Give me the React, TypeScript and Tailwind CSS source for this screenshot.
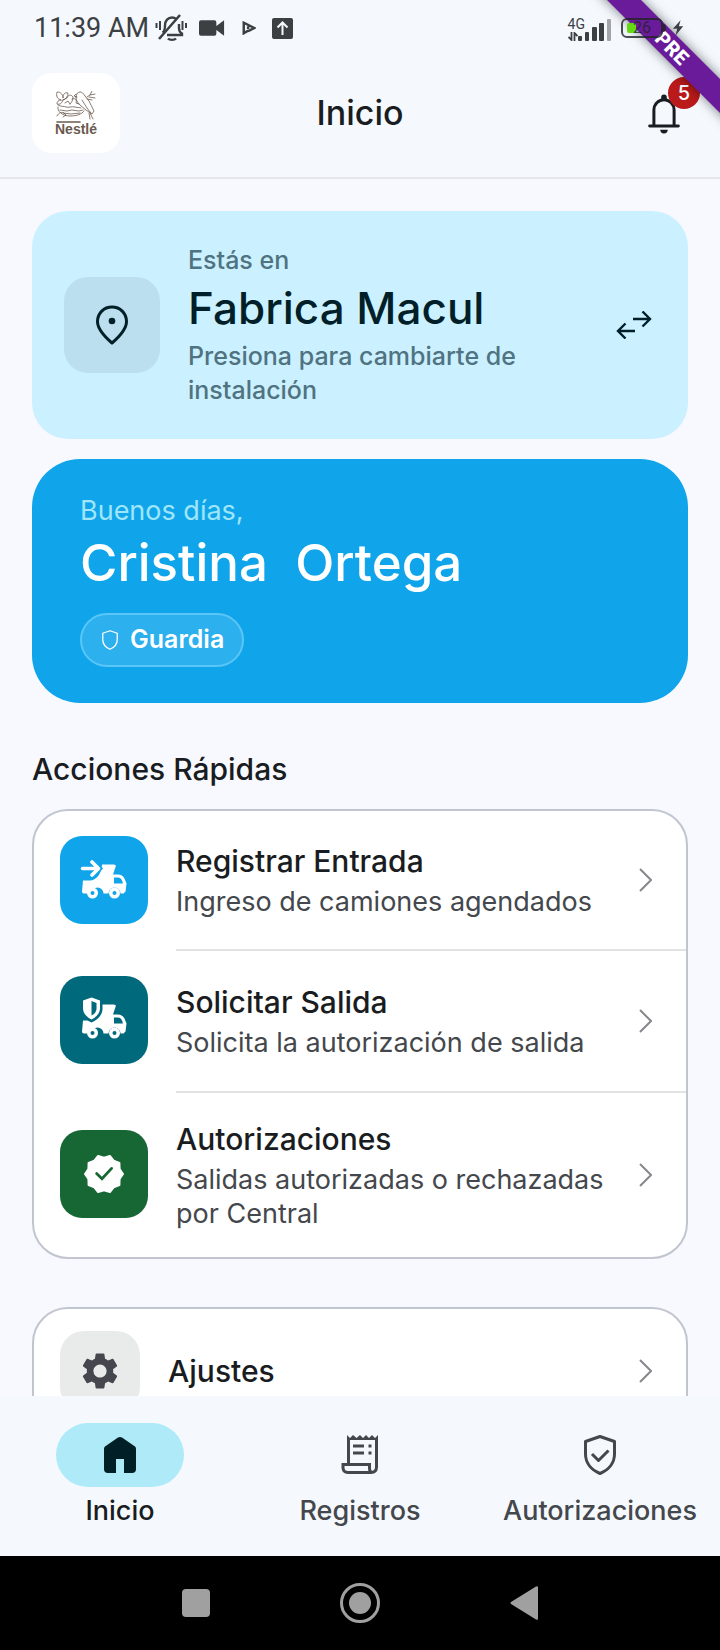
import type { ReactNode } from "react";

type Action = {
  title: string;
  subtitle: string;
  color: string;
  row: string;
  icon: ReactNode;
};

function StatusIcons() {
  return (
    <div className="flex items-center text-[#3c4043]">
      <svg className="size-8" viewBox="0 0 32 32" fill="none" stroke="currentColor" strokeWidth="2.4">
        <path d="M4 27 25 3" strokeWidth="2.6" />
        <path d="M7.500 20.500c2-1 2.500-3 2.500-7 0-5 3-8 7-8 1.500 0 3 .4 4 1.300M24 12v4c0 3 .8 4.500 3 5.500v1.500H12" />
        <path d="M13 26.500c1.500 1.800 6.500 1.800 8 0" />
        <path d="M1.500 11v5M5 9v9M27.500 9v9M31 11v5" strokeWidth="2" />
      </svg>
      <svg className="ml-3 h-[18px] w-[27px]" viewBox="0 0 28 18" fill="currentColor">
        <path d="M2 1h14a2 2 0 0 1 2 2v4l8-6v16l-8-6v4a2 2 0 0 1-2 2H2a2 2 0 0 1-2-2V3a2 2 0 0 1 2-2z" />
      </svg>
      <svg className="ml-4 size-[14px]" viewBox="0 0 16 16" fill="none" stroke="currentColor" strokeWidth="2.800">
        <path d="M2 9V2l12 6-7 3.500M7 6v3M2 9v5l5-3" />
      </svg>
      <svg className="ml-4 size-[21px]" viewBox="0 0 21 21" fill="none">
        <rect width="21" height="21" rx="2" fill="currentColor" />
        <path d="M10.500 17V5M5.500 9.500l5-5 5 5" stroke="#f5f9fe" strokeWidth="2" />
      </svg>
    </div>
  );
}

function SignalIcons() {
  return (
    <div className="flex items-center text-[#3c4043]">
      <div className="flex h-[26px] items-end">
        <div className="flex flex-col items-start">
          <span className="font-[Roboto] text-sm leading-4">4G</span>
          <svg className="h-[9px] w-[10px]" viewBox="0 0 10 9" fill="none" stroke="currentColor" strokeWidth="1.800">
            <path d="M3.500 0v8L.5 5M6.500 9V1l3 3" />
          </svg>
        </div>
        <svg className="-ml-2 h-[22px] w-[34px]" viewBox="0 0 34 22" fill="currentColor">
          <rect x="1" y="17" width="4" height="5" rx="1" />
          <rect x="8" y="13" width="4" height="9" rx="1" />
          <rect x="15" y="8" width="5" height="14" rx="1" />
          <rect x="22" y="4" width="5" height="18" rx="1" />
          <rect x="30" y="0" width="4" height="22" rx="1" opacity=".45" />
        </svg>
      </div>
      <div className="relative ml-[10px] flex h-5 w-[42px] items-center justify-center rounded-md border-2 border-[#202226]/80">
        <span className="absolute left-1 h-[10px] w-[9px] rounded-xs bg-[#63d813]" />
        <span className="relative font-[Roboto] text-base leading-4 text-[#202226]/80">26</span>
      </div>
      <span className="h-2 w-[3px] rounded-r-sm bg-[#202226]/80" />
      <svg className="ml-[6px] h-[18px] w-3" viewBox="0 0 14 18" fill="currentColor">
        <path d="M10 0 1 10h5L4 18 13 7H8z" />
      </svg>
    </div>
  );
}

function NestLogo() {
  return (
    <div className="flex h-20 w-[88px] flex-col items-center justify-center rounded-[20px] bg-white text-[#6b5a4f]">
      <svg className="h-8 w-10" viewBox="0 0 40 32" fill="none" stroke="currentColor" strokeWidth=".8" strokeLinecap="round" strokeLinejoin="round">
        <path d="M5 9C1 8 0 5 1 1c4 0 6 3 6 6 0-4 2-6 5-5 0 4-2 6-5 7M5 9c-3 0-4 2-4 4 3 1 5-1 6-4" />
        <path d="M7 9l4-2c1-3 4-4 6-1 0 3-1 5-3 7M16 8c3-1 5 0 4 4l3 1M9 12l3-2 2 3" />
        <path d="M20 6c0-3 2-5 4-5s3 1 5 4l4 5 5 10-2 3-6-4-6-5c-3-3-4-5-4-8z" />
        <path d="M20 3l-2 2 3 1M26 9l5 8 4 5M34 22l3 6M33 22l1 6M31 6l3-2 2-4M34 4l5-1M33 6l6 1M31 8l5 1" />
        <path d="M2 14c3 2 6 1 8 2s6-1 9 0 5 0 6 1M2 16c-1 4 4 9 12 9 7 0 12-2 14-5" />
        <path d="M4 19l7 1 5-1 7 1 4-1M7 22l8 1 9-1M1 25c2-4 5-4 7-3l2 2-3 2" />
        <path d="M1 31h23" strokeWidth="1.600" />
      </svg>
      <span className="font-['Liberation_Sans',sans-serif] text-sm leading-3 font-bold">Nestlé</span>
    </div>
  );
}

function BellIcon() {
  return (
    <svg className="size-12" viewBox="0 0 24 24" fill="currentColor">
      <path d="M4.800 19.200a.7.7 0 0 1 0-1.400h1.400V10.400a5.700 5.700 0 0 1 4.400-5.600v-.6a1.400 1.400 0 0 1 2.800 0v.6a5.700 5.700 0 0 1 4.400 5.600v7.400h1.400a.7.7 0 0 1 0 1.400zm2.900-1.400h8.600v-7.400a4.300 4.300 0 0 0-8.600 0zM12 22.200a1.900 1.900 0 0 1-1.900-1.800h3.800A1.900 1.900 0 0 1 12 22.200z" />
    </svg>
  );
}

function PinIcon() {
  return (
    <svg className="size-12" viewBox="0 0 48 48" fill="none" stroke="currentColor" strokeWidth="3">
      <path d="M24 42C13.500 33 9.500 27 9.500 20.500 9.500 12 16 6 24 6s14.500 6 14.500 14.500C38.500 27 34.500 33 24 42z" strokeLinejoin="round" />
      <circle cx="24" cy="20" r="3.300" fill="currentColor" stroke="none" />
    </svg>
  );
}

function SwapIcon() {
  return (
    <svg className="mr-1 h-7 w-9" viewBox="0 0 36 28" fill="none" stroke="currentColor" strokeWidth="2.400">
      <path d="M17 8h17M26.500 .5l7.500 7.500-7.500 7.500M19 20H2M9.500 12.500L2 20l7.500 7.500" />
    </svg>
  );
}

function ChevronIcon() {
  return (
    <svg className="h-6 w-[14px] shrink-0 text-[#85888c]" viewBox="0 0 14 24" fill="none" stroke="currentColor" strokeWidth="2">
      <path d="M2 1l11 11L2 23" />
    </svg>
  );
}

function TruckBody() {
  return (
    <>
      <path d="M22 5.500h12l2 1-3 9h5c3 0 5 1.500 6.500 4l2 5-1 8-2 2h-3a6 6 0 0 0-12 0h-5a6 6 0 0 0-12 0H4q-2 0-2-2l1-11h7c6 0 12-7 12-16z" />
      <path d="M34 18.500h4c2 0 3 1 4 3l1 3h-9z" fill="var(--hole)" />
      <circle cx="12.500" cy="34" r="5.500" />
      <circle cx="34.500" cy="34" r="5.500" />
      <circle cx="12.500" cy="34" r="2" fill="var(--hole)" />
      <circle cx="34.500" cy="34" r="2" fill="var(--hole)" />
    </>
  );
}

function TruckEntryIcon() {
  return (
    <svg className="h-10 w-12 [--hole:#10a5ea]" viewBox="0 1 48 40" fill="currentColor">
      <TruckBody />
      <path d="M2 9.500h15M11.500 3.500l6 6-6 6" fill="none" stroke="var(--hole)" strokeWidth="8" />
      <path d="M2.500 9.500h15M12 3l6.500 6.500L12 16" fill="none" stroke="currentColor" strokeWidth="3.600" strokeLinecap="round" strokeLinejoin="round" />
    </svg>
  );
}

function TruckShieldIcon() {
  return (
    <svg className="h-10 w-12 overflow-visible [--hole:#00697b]" viewBox="0 1 48 40" fill="currentColor">
      <TruckBody />
      <path d="M11.500-4l11 4v10c0 6-5 11-11 13.500C5.500 21 1 16 1 10V0z" fill="var(--hole)" />
      <path d="M11.500-1.500l8.500 3v8c0 4.500-3.500 8.500-8.500 11C6.500 18 3 14 3 9.500v-8z" />
      <path d="M11.500 2l5 2v6c0 2.500-2 5-5 6.500z" fill="var(--hole)" />
    </svg>
  );
}

function VerifiedIcon() {
  return (
    <svg className="size-12" viewBox="0 0 24 24" fill="currentColor">
      <path
        d="M21.500 12L19.800 9.470L19.690 6.420L16.820 5.370L14.940 2.970L12 3.800L9.060 2.970L7.180 5.370L4.310 6.420L4.200 9.470L2.500 12L4.200 14.530L4.310 17.580L7.180 18.630L9.060 21.030L12 20.200L14.940 21.030L16.820 18.630L19.690 17.580L19.800 14.530Z"
        stroke="currentColor"
        strokeLinejoin="round"
      />
      <path d="M8.300 11.800l2.700 2.600 4.800-5.200" fill="none" stroke="#176734" strokeWidth="1.400" strokeLinecap="round" />
    </svg>
  );
}

function GearIcon() {
  return (
    <svg className="size-11" viewBox="0 0 24 24" fill="currentColor">
      <path d="M19.140 12.940c.04-.3.060-.61.060-.94 0-.32-.02-.64-.07-.94l2.030-1.580a.49.490 0 0 0 .12-.61l-1.920-3.320a.488.488 0 0 0-.59-.22l-2.390.96c-.5-.38-1.030-.7-1.620-.94l-.36-2.540a.484.484 0 0 0-.48-.41h-3.840c-.24 0-.43.170-.47.410l-.36 2.540c-.59.240-1.130.57-1.620.94l-2.390-.96c-.22-.08-.47 0-.59.220L2.740 8.870c-.12.210-.08.470.12.610l2.030 1.580c-.05.300-.09.630-.09.940s.02.640.07.940l-2.030 1.580a.49.490 0 0 0-.12.610l1.920 3.320c.12.220.37.290.59.220l2.390-.96c.5.380 1.030.7 1.620.94l.36 2.540c.05.240.24.410.48.410h3.840c.24 0 .44-.17.470-.41l.36-2.540c.59-.24 1.130-.56 1.620-.94l2.390.96c.22.080.47 0 .59-.22l1.920-3.320c.12-.22.070-.47-.12-.61l-2.010-1.580zM12 15.600A3.610 3.610 0 0 1 8.400 12c0-1.980 1.620-3.600 3.600-3.600s3.600 1.620 3.600 3.600-1.620 3.600-3.600 3.600z" />
    </svg>
  );
}

function HomeIcon() {
  return (
    <svg className="size-9" viewBox="0 0 36 36" fill="currentColor">
      <path d="M18 0q1 0 2 .6l13 9q1 .8 1 2.400v20q0 4-4 4h-8V22h-8v14H6q-4 0-4-4V12q0-1.600 1-2.400l13-9Q17 0 18 0z" />
    </svg>
  );
}

function ReceiptIcon() {
  return (
    <svg className="size-10" viewBox="0 0 40 40" fill="none" stroke="currentColor" strokeWidth="3">
      <path d="M8.500 29V3M36.500 3v29q0 5.500-5.500 5.500H8q-5 0-5-5V29.500h26.500V33q0 4.500 3 4.500" />
      <path d="M7 0l3 3 3-3 3.500 3L20 0l3 3 3-3 3 3 3-3 3 3 3-3v5H7z" fill="currentColor" stroke="none" />
      <path d="M13 11h11M13 18h11M28.500 11h3M28.500 18h3" />
    </svg>
  );
}

function ShieldIcon({ check = false }: { check?: boolean }) {
  return (
    <svg className={check ? "size-10" : "size-5"} viewBox="0 0 40 40" fill="none" stroke="currentColor" strokeWidth={check ? 3 : 2.6} strokeLinejoin="round">
      <path d="M20 1.500L34.500 6.500V19c0 9-6 16-14.500 19.500C11.500 35 5.500 28 5.500 19V6.500z" />
      {check && <path d="M12 19l6.500 6.500L28.500 15.500" />}
    </svg>
  );
}

const actions: Action[] = [
  {
    title: "Registrar Entrada",
    subtitle: "Ingreso de camiones agendados",
    color: "bg-[#10a5ea]",
    row: "min-h-[138px]",
    icon: <TruckEntryIcon />,
  },
  {
    title: "Solicitar Salida",
    subtitle: "Solicita la autorización de salida",
    color: "bg-[#00697b]",
    row: "min-h-[142px] border-t-2",
    icon: <TruckShieldIcon />,
  },
  {
    title: "Autorizaciones",
    subtitle: "Salidas autorizadas o rechazadas por Central",
    color: "bg-[#176734]",
    row: "min-h-[166px] border-t-2",
    icon: <VerifiedIcon />,
  },
];

const tabs = [
  { label: "Inicio", icon: <HomeIcon />, active: true },
  { label: "Registros", icon: <ReceiptIcon />, active: false },
  { label: "Autorizaciones", icon: <ShieldIcon check />, active: false },
];

export default function App() {
  return (
    <div className="relative flex h-screen flex-col overflow-hidden bg-[#f8f9ff] font-[Inter,sans-serif] text-[#191c20]">
      <header className="border-b-2 border-[#e5e6eb] bg-[#f5f9fe]">
        <div className="relative z-10 flex h-14 items-center justify-between pr-9 pl-[34px]">
          <div className="flex items-center gap-[6px]">
            <span className="font-[Roboto] text-[27px] text-[#3c4043]">11:39 AM</span>
            <StatusIcons />
          </div>
          <SignalIcons />
        </div>
        <div className="grid grid-cols-3 items-center px-8 pt-[17px] pb-6">
          <NestLogo />
          <h1 className="text-center text-[34px] leading-10 font-medium">Inicio</h1>
          <button aria-label="Notificaciones" className="relative justify-self-end">
            <BellIcon />
            <span className="absolute -top-3 -right-3 flex size-8 items-center justify-center rounded-full bg-[#ba1a1a] text-xl font-medium text-white">5</span>
          </button>
        </div>
      </header>

      <main className="flex min-h-0 flex-1 flex-col overflow-hidden px-8 pt-8">
        <button className="flex shrink-0 items-center rounded-[36px] bg-[#cbf0ff] px-8 py-8 text-left text-[#001f29]">
          <span className="flex size-24 shrink-0 items-center justify-center rounded-3xl bg-[#bbdfee]">
            <PinIcon />
          </span>
          <span className="ml-7 flex flex-1 flex-col">
            <span className="text-[25px] leading-[34px] font-medium text-[#4f7380]">Estás en</span>
            <span className="text-[44px] leading-[62px] font-medium">Fabrica Macul</span>
            <span className="pr-10 text-[25px] leading-[34px] font-medium text-[#4f7380]">Presiona para cambiarte de instalación</span>
          </span>
          <SwapIcon />
        </button>

        <section className="mt-5 flex shrink-0 flex-col items-start rounded-[48px] bg-[#10a5ea] px-12 pt-8 pb-9 text-white">
          <p className="text-[27px] leading-10 text-[#9fe6fb]">Buenos días,</p>
          <p className="text-[51px] leading-[64px] font-medium whitespace-pre">Cristina  Ortega</p>
          <span className="mt-[18px] flex h-[54px] items-center gap-[10px] rounded-full border-2 border-[#5ac6f8] bg-[#2cb0ee] px-[18px] text-[25px] font-semibold">
            <ShieldIcon />
            Guardia
          </span>
        </section>

        <h2 className="mt-[46px] shrink-0 text-[30px] leading-10 font-medium">Acciones Rápidas</h2>
        <ul className="mt-5 shrink-0 overflow-hidden rounded-[36px] border-2 border-[#c0c5cf] bg-white">
          {actions.map((action) => (
            <li key={action.title}>
              <button className="flex w-full items-center pl-[26px] text-left">
                <span className={`flex size-[88px] shrink-0 items-center justify-center rounded-[22px] text-white ${action.color}`}>
                  {action.icon}
                </span>
                <span className={`ml-7 flex flex-1 items-center border-[#e1e2e4] pr-[34px] ${action.row}`}>
                  <span className="flex flex-1 flex-col gap-1 pr-4">
                    <span className="text-[30px] leading-10 font-medium">{action.title}</span>
                    <span className="text-[27px] leading-[34px] text-[#44474c]">{action.subtitle}</span>
                  </span>
                  <ChevronIcon />
                </span>
              </button>
            </li>
          ))}
        </ul>

        <button className="mt-12 flex shrink-0 items-center rounded-[36px] border-2 border-[#c0c5cf] bg-white py-[22px] pr-[34px] pl-[26px] text-left">
          <span className="flex size-20 items-center justify-center rounded-3xl bg-[#e9ebea] text-[#44474e]">
            <GearIcon />
          </span>
          <span className="ml-7 flex-1 text-[30px] leading-10 font-medium">Ajustes</span>
          <ChevronIcon />
        </button>
      </main>

      <nav className="grid shrink-0 grid-cols-3 bg-[#f5f9fe] pt-[27px] pb-[29px]">
        {tabs.map((tab) => (
          <a
            key={tab.label}
            href="#"
            className={`flex flex-col items-center gap-2 ${tab.active ? "text-[#191c20]" : "text-[#44474c]"}`}
          >
            <span className={`flex h-16 w-32 items-center justify-center rounded-full ${tab.active ? "bg-[#aeeaf8] text-[#001f26]" : ""}`}>
              {tab.icon}
            </span>
            <span className="text-[27px] leading-8 font-medium">{tab.label}</span>
          </a>
        ))}
      </nav>

      <div className="flex h-[94px] shrink-0 items-center justify-center gap-[130px] bg-black">
        <button aria-label="Recientes" className="size-7 rounded-sm bg-[#a0a0a0]" />
        <button aria-label="Inicio" className="flex size-10 items-center justify-center rounded-full border-3 border-[#a0a0a0]">
          <span className="size-[22px] rounded-full bg-[#a0a0a0]" />
        </button>
        <button aria-label="Atrás">
          <svg className="h-[34px] w-7" viewBox="0 0 28 34" fill="#a0a0a0">
            <path d="M26 .5q2-1 2 1v31q0 2-2 1L1 18q-1-1 0-2z" />
          </svg>
        </button>
      </div>

      <div className="absolute top-9 -right-18 flex h-6 w-60 rotate-45 items-center justify-center bg-[#6a1b9a] font-[Roboto] text-xl font-black text-white shadow-[0_0_12px_rgba(0,0,0,0.5)]">
        PRE
      </div>
    </div>
  );
}
